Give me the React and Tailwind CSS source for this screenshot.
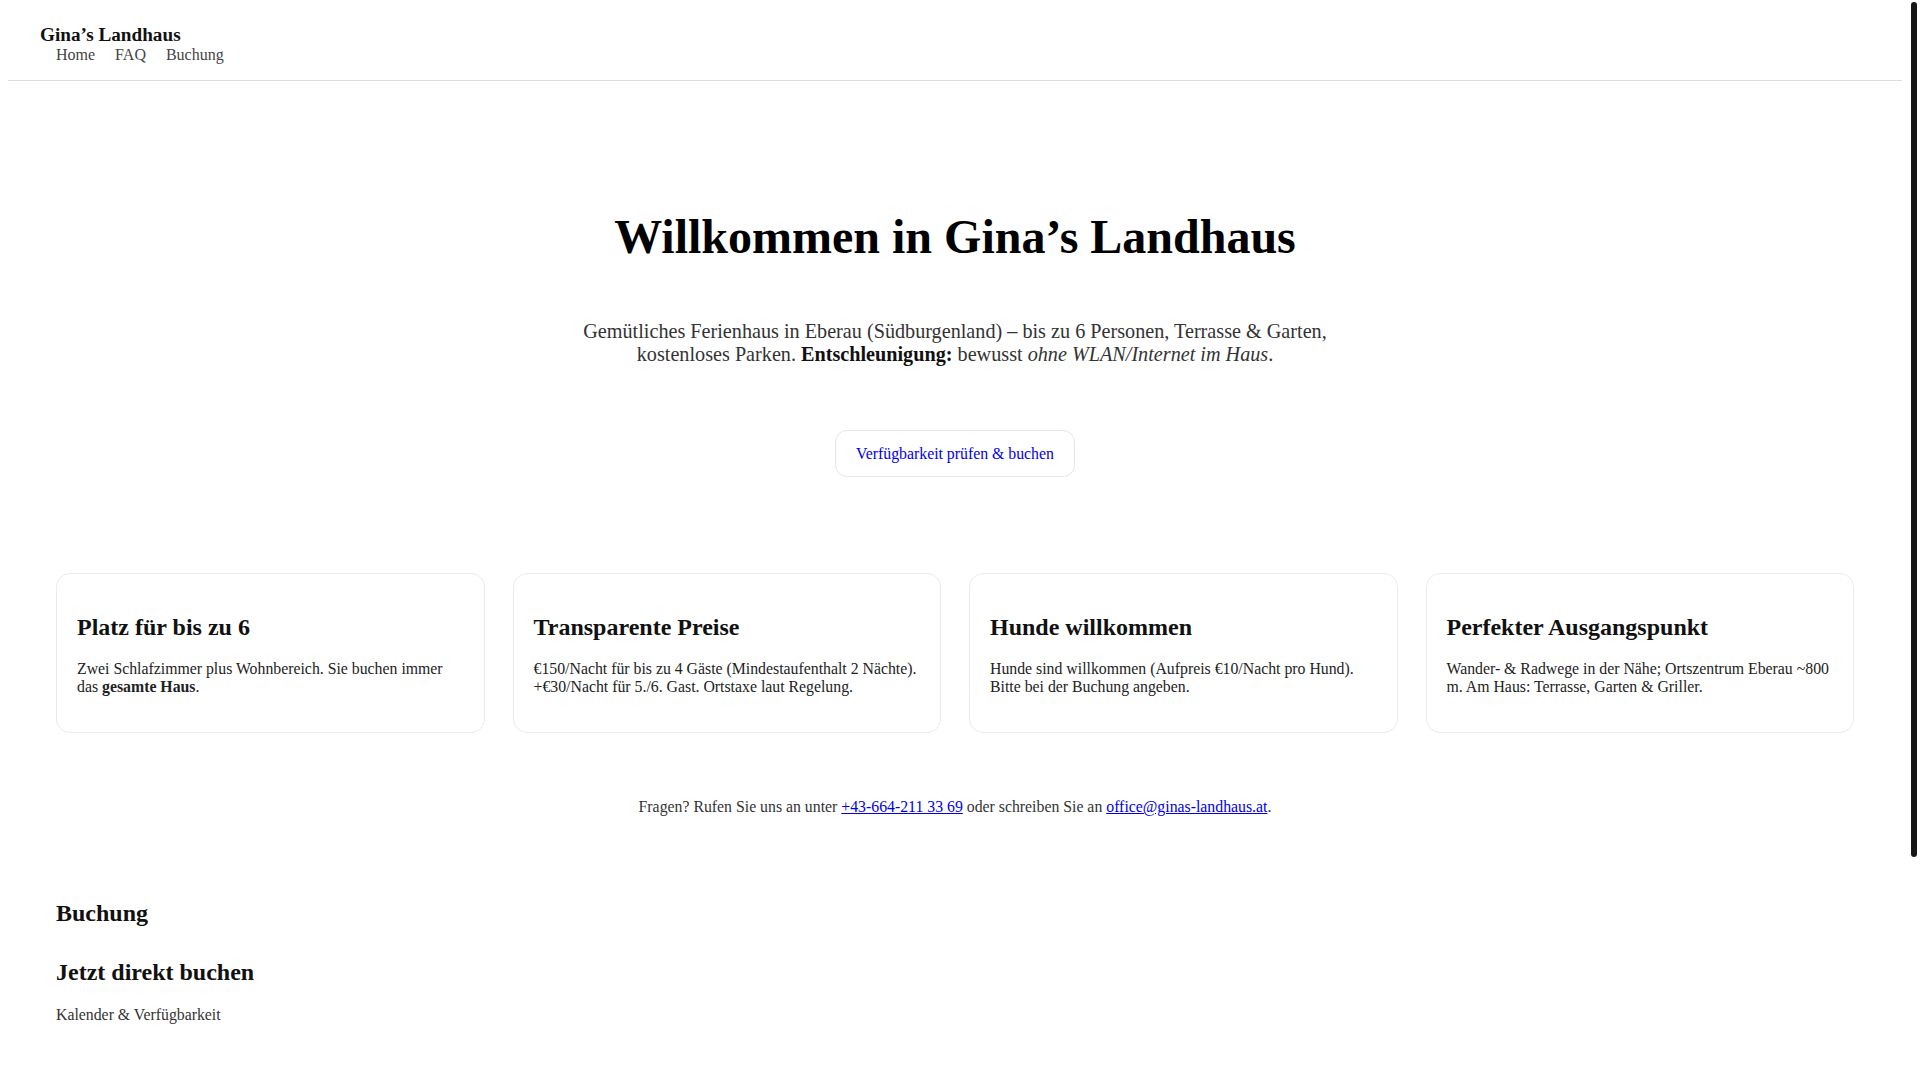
import React from 'react';

const features = [
  {
    title: 'Platz für bis zu 6',
    body: (
      <>
        Zwei Schlafzimmer plus Wohnbereich. Sie buchen immer das <strong>gesamte Haus</strong>.
      </>
    ),
  },
  {
    title: 'Transparente Preise',
    body: '€150/Nacht für bis zu 4 Gäste (Mindestaufenthalt 2 Nächte). +€30/Nacht für 5./6. Gast. Ortstaxe laut Regelung.',
  },
  {
    title: 'Hunde willkommen',
    body: 'Hunde sind willkommen (Aufpreis €10/Nacht pro Hund). Bitte bei der Buchung angeben.',
  },
  {
    title: 'Perfekter Ausgangspunkt',
    body: 'Wander- & Radwege in der Nähe; Ortszentrum Eberau ~800 m. Am Haus: Terrasse, Garten & Griller.',
  },
];

export default function App() {
  return (
    <div className="flex h-screen overflow-hidden bg-white font-['Liberation_Serif','Times_New_Roman',serif] text-[#111]">
      <div className="flex-1 px-2">
        {/* Header */}
        <header className="px-8 pt-[24px] pb-[16px] border-b border-[#dedede]">
          <div className="text-[19.2px] font-bold leading-[22px] text-[#111]">Gina’s Landhaus</div>
          <nav className="ml-4 flex gap-5 text-base leading-[18px] text-[#444]">
            <a href="#">Home</a>
            <a href="#">FAQ</a>
            <a href="#">Buchung</a>
          </nav>
        </header>

        <main className="px-12">
          {/* Hero */}
          <section className="text-center">
            <h1 className="mt-[128px] text-[48px] font-bold leading-[55px] text-black">
              Willkommen in Gina’s Landhaus
            </h1>
            <p className="mx-auto mt-[56px] max-w-[780px] text-[20.2px] leading-[23px] text-[#333]">
              Gemütliches Ferienhaus in Eberau (Südburgenland) – bis zu 6 Personen, Terrasse &amp; Garten,
              kostenloses Parken. <strong className="text-[#111]">Entschleunigung:</strong> bewusst{' '}
              <em>ohne WLAN/Internet im Haus</em>.
            </p>
            <div className="mt-[64px] flex justify-center">
              <a
                href="#buchung"
                className="rounded-xl border border-[#e6e6e6] px-5 py-[13px] text-[15.8px] leading-[19px] text-[#0000ee]"
              >
                Verfügbarkeit prüfen &amp; buchen
              </a>
            </div>
          </section>

          {/* Features */}
          <section className="mt-[96px] grid grid-cols-4 gap-7">
            {features.map((f) => (
              <div key={f.title} className="rounded-[14px] border border-[#ebebeb] px-5 pt-[39px] pb-[36px]">
                <h3 className="text-2xl font-bold leading-[28px] text-[#111]">{f.title}</h3>
                <p className="mt-[19px] text-[15.8px] leading-[18.2px] text-[#222]">{f.body}</p>
              </div>
            ))}
          </section>

          <p className="mt-[65px] text-center text-[15.8px] leading-[18px] text-[#333]">
            Fragen? Rufen Sie uns an unter{' '}
            <a href="#" className="text-[#0000ee] underline">+43-664-211 33 69</a> oder schreiben Sie an{' '}
            <a href="#" className="text-[#0000ee] underline">office@ginas-landhaus.at</a>.
          </p>

          {/* Buchung */}
          <section id="buchung">
            <h2 className="mt-[83px] text-2xl font-bold leading-[28px] text-[#111]">Buchung</h2>
            <h3 className="mt-[31px] text-2xl font-bold leading-[28px] text-[#111]">Jetzt direkt buchen</h3>
            <p className="mt-[20px] text-[15.8px] leading-[18px] text-[#333]">Kalender &amp; Verfügbarkeit</p>
            <div className="h-[300px]" />
          </section>
        </main>
      </div>

      {/* scrollbar */}
      <div className="w-[10px] shrink-0 pt-[2px]">
        <div className="ml-px h-[855px] w-[6px] rounded-full bg-[#161616]" />
      </div>
    </div>
  );
}
